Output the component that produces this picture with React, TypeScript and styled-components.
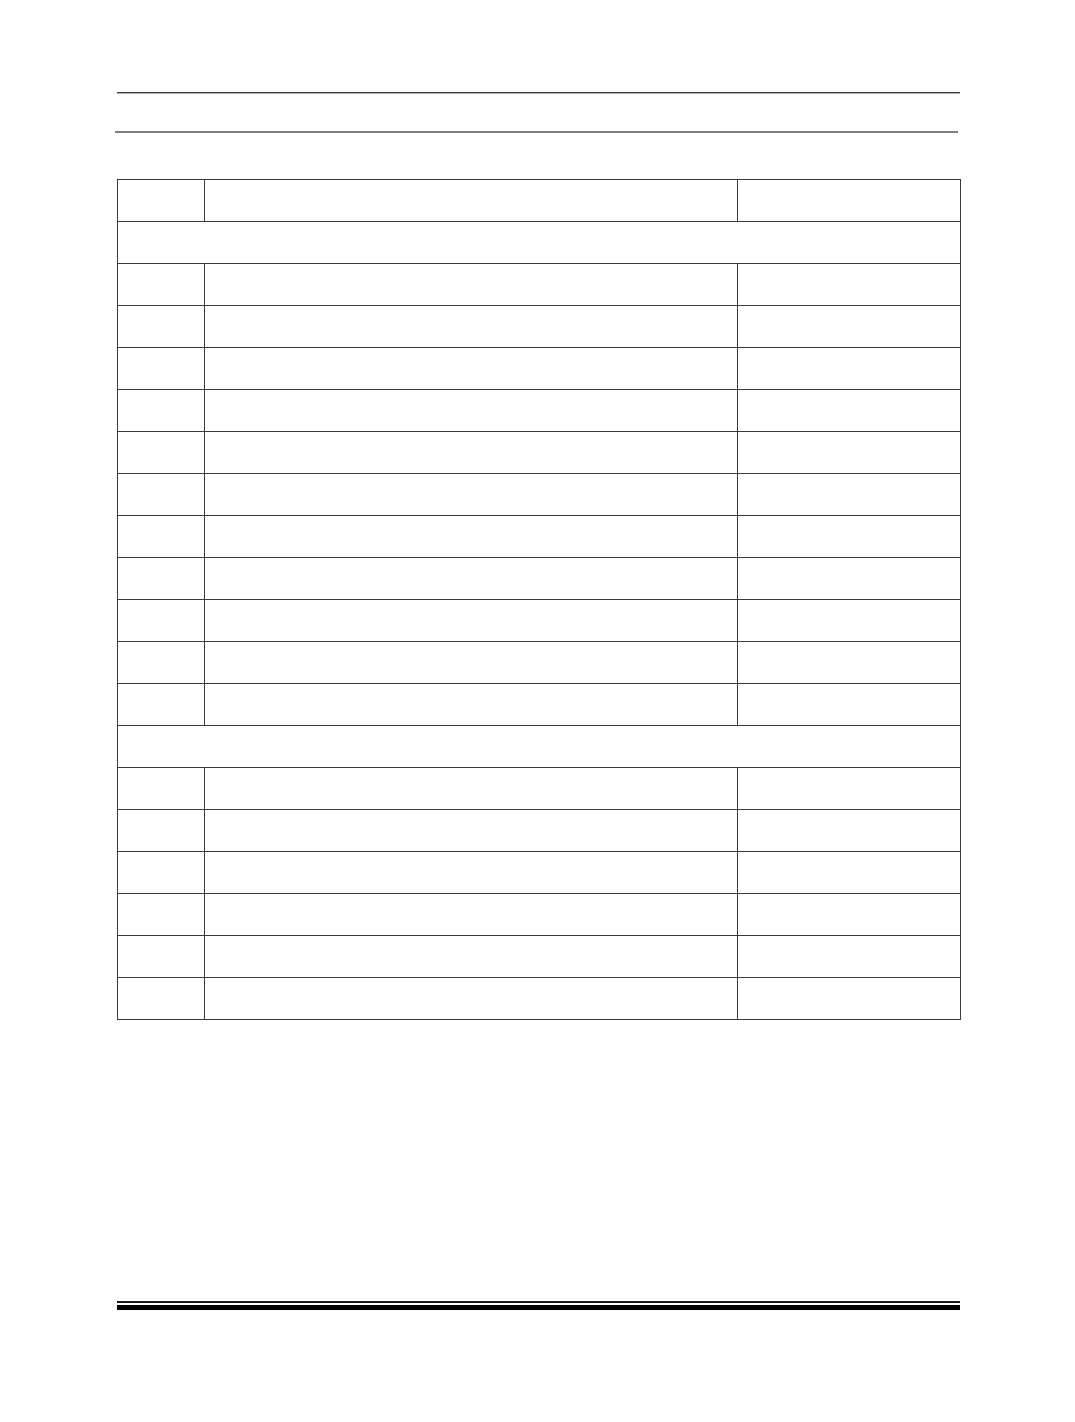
import React from "react";
import styled, { createGlobalStyle } from "styled-components";

const Global = createGlobalStyle`
  html, body { margin: 0; padding: 0; background: #fff; }
  body { font-family: "Liberation Serif", "Times New Roman", serif; }
`;

const Page = styled.div`
  width: 1075px;
  height: 1422px;
  box-sizing: border-box;
  padding: 92px 115px 0 117px;
  display: flex;
  flex-direction: column;
`;

const HeaderRule = styled.div`
  height: 1px;
  background: #3c3c3c;
  border-bottom: 1px solid #b0b0b0;
  width: 843px;
`;

const SubRule = styled.div`
  margin-top: 37px;
  margin-left: -2px;
  height: 2px;
  width: 843px;
  background: #808080;
`;

const Table = styled.table`
  margin-top: 46px;
  width: 843px;
  border-collapse: collapse;
  table-layout: fixed;
`;

const Cell = styled.td<{ $w?: number }>`
  height: 41px;
  padding: 0;
  border: 1px solid #3a3a3a;
  ${(p) => (p.$w ? `width: ${p.$w}px;` : "")}
`;

const SectionCell = styled.td`
  height: 41px;
  padding: 0;
  border: 1px solid #3a3a3a;
`;

const Spacer = styled.div`
  flex: 1;
`;

const FooterThin = styled.div`
  height: 2px;
  width: 843px;
  background: #1a1a1a;
`;

const FooterThick = styled.div`
  margin-top: 2px;
  height: 5px;
  width: 843px;
  background: #000;
  margin-bottom: 112px;
`;

const Row = () => (
  <tr>
    <Cell />
    <Cell />
    <Cell />
  </tr>
);

export default function App() {
  return (
    <>
      <Global />
      <Page>
        <HeaderRule />
        <SubRule />
        <Table>
          <tbody>
            <tr>
              <Cell $w={86} />
              <Cell $w={532} />
              <Cell $w={222} />
            </tr>
            <tr>
              <SectionCell colSpan={3} />
            </tr>
            {Array.from({ length: 11 }).map((_, i) => (
              <Row key={"a" + i} />
            ))}
            <tr>
              <SectionCell colSpan={3} />
            </tr>
            {Array.from({ length: 6 }).map((_, i) => (
              <Row key={"b" + i} />
            ))}
          </tbody>
        </Table>
        <Spacer />
        <FooterThin />
        <FooterThick />
      </Page>
    </>
  );
}
